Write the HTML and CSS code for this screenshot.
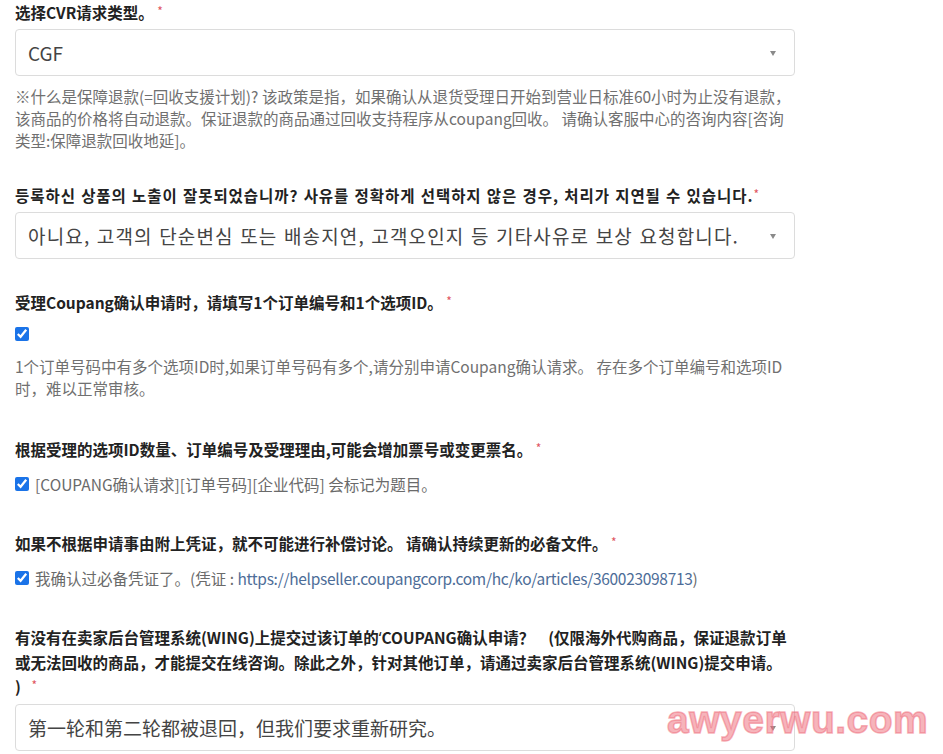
FILE: index.html
```html
<!DOCTYPE html>
<html lang="zh-CN">
<head>
<meta charset="utf-8">
<title>CVR</title>
<link rel="stylesheet" href="styles.css">
</head>
<body>
<div class="form">
  <div class="group group-select">
    <div class="label">选择CVR请求类型。 <span class="req">*</span></div>
    <div class="select"><span class="val">CGF</span><span class="caret"></span></div>
    <p class="help">※什么是保障退款(=回收支援计划)? 该政策是指，如果确认从退货受理日开始到营业日标准60小时为止没有退款，<br>该商品的价格将自动退款。保证退款的商品通过回收支持程序从coupang回收。 请确认客服中心的咨询内容[咨询<br>类型:保障退款回收地延]。</p>
  </div>

  <div class="group group-select2" lang="ko">
    <div class="label ko">등록하신 상품의 노출이 잘못되었습니까? 사유를 정확하게 선택하지 않은 경우, 처리가 지연될 수 있습니다.<span class="req">*</span></div>
    <div class="select ko"><span class="val">아니요, 고객의 단순변심 또는 배송지연, 고객오인지 등 기타사유로 보상 요청합니다.</span><span class="caret"></span></div>
  </div>

  <div class="group group-check">
    <div class="label">受理Coupang确认申请时，请填写1个订单编号和1个选项ID。 <span class="req">*</span></div>
    <div class="check"><input type="checkbox" checked></div>
    <p class="help help-check">1个订单号码中有多个选项ID时,如果订单号码有多个,请分别申请Coupang确认请求。 存在多个订单编号和选项ID<br>时，难以正常审核。</p>
  </div>

  <div class="group group-row">
    <div class="label">根据受理的选项ID数量、订单编号及受理理由,可能会增加票号或变更票名。 <span class="req">*</span></div>
    <label class="check"><input type="checkbox" checked><span>[COUPANG确认请求][订单号码][企业代码] 会标记为题目。</span></label>
  </div>

  <div class="group group-row">
    <div class="label">如果不根据申请事由附上凭证，就不可能进行补偿讨论。 请确认持续更新的必备文件。 <span class="req">*</span></div>
    <label class="check"><input type="checkbox" checked><span>我确认过必备凭证了。(凭证 : <a class="link" href="#">https://helpseller.coupangcorp.com/hc/ko/articles/360023098713</a>)</span></label>
  </div>

  <div class="group">
    <div class="label">有没有在卖家后台管理系统(WING)上提交过该订单的<span class="quote">‘</span>COUPANG确认申请？&nbsp;&nbsp;&nbsp;&nbsp;(仅限海外代购商品，保证退款订单<br>或无法回收的商品，才能提交在线咨询。除此之外，针对其他订单，请通过卖家后台管理系统(WING)提交申请。<br>)&nbsp;&nbsp; <span class="req">*</span></div>
    <div class="select"><span class="val">第一轮和第二轮都被退回，但我们要求重新研究。</span><span class="caret"></span></div>
  </div>
</div>
<div class="watermark">awyerwu.com</div>
</body>
</html>
```

FILE: styles.css
```css
html, body {
  margin: 0;
  padding: 0;
  background: #ffffff;
}

body {
  padding: 0 15px;
  font-family: "Noto Sans CJK SC", "Noto Sans", sans-serif;
  font-size: 15.5px;
  color: #333333;
  position: relative;
  height: 754px;
  overflow: hidden;
}

.form {
  width: 780px;
  display: flex;
  flex-direction: column;
}

.ko {
  font-family: "Noto Sans CJK KR", "Noto Sans", sans-serif;
}

.group-select { margin-bottom: 32px; }
.group-select2 { margin-bottom: 31px; }
.group-check { margin-bottom: 38px; }
.group-row { margin-bottom: 36px; }

.label {
  font-weight: 700;
  line-height: 24px;
  color: #222222;
  white-space: nowrap;
}

.label.ko {
  letter-spacing: 0.95px;
}

.quote {
  font-family: "Noto Sans", sans-serif;
  font-weight: 400;
}

.req {
  color: #e05561;
  font-weight: 400;
  font-size: 12px;
  line-height: 1;
  vertical-align: 3px;
  letter-spacing: 0;
}

.select {
  margin-top: 5px;
  height: 47px;
  box-sizing: border-box;
  border: 1px solid #dcdcdc;
  border-radius: 4px;
  display: flex;
  align-items: center;
  justify-content: space-between;
  padding: 0 18px 0 12px;
  font-size: 19px;
  color: #444444;
  background: #ffffff;
}

.select.ko .val {
  letter-spacing: 1.15px;
}

.group:last-child .select { margin-top: 6px; }

.val {
  white-space: nowrap;
}

.caret {
  width: 0;
  height: 0;
  border-left: 3.5px solid transparent;
  border-right: 3.5px solid transparent;
  border-top: 5px solid #8a8a8a;
  margin-top: 1px;
}

.help {
  margin: 9px 0 0;
  line-height: 22px;
  color: #707070;
  white-space: nowrap;
}

.help-check {
  margin-top: 10px;
}

.check {
  display: flex;
  align-items: center;
  gap: 6px;
  height: 22px;
  margin-top: 12px;
  color: #6a6a6a;
  white-space: nowrap;
}

.group-check .check { margin-top: 9px; }

.check input {
  width: 14px;
  height: 14px;
  margin: 0;
  accent-color: #1a73e8;
}

.link {
  color: #4d6d98;
  text-decoration: none;
  letter-spacing: -0.3px;
}

.watermark {
  position: absolute;
  left: 667px;
  top: 700px;
  font-family: "Liberation Sans", Arial, sans-serif;
  font-weight: 700;
  font-size: 39px;
  line-height: 1;
  letter-spacing: 0.5px;
  color: rgba(238, 105, 120, 0.5);
  -webkit-text-stroke: 1.5px rgba(238, 105, 120, 0.5);
  pointer-events: none;
}
```
